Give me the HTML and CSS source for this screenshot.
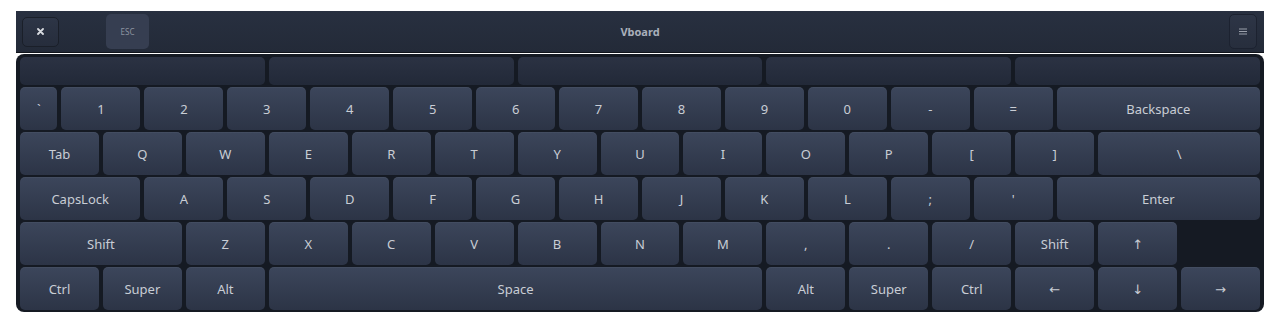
FILE: index.html
```html
<!DOCTYPE html>
<html>
<head>
<meta charset="utf-8">
<title>Vboard</title>
<link rel="stylesheet" href="styles.css">
</head>
<body>
<div class="app">
  <header class="titlebar">
    <button class="tb-btn btn-close" aria-label="Close">
      <svg width="7" height="7" viewBox="0 0 7 7"><path d="M1 1L6 6M6 1L1 6" stroke="#d8dbe0" stroke-width="1.8" stroke-linecap="round"/></svg>
    </button>
    <button class="tb-btn btn-esc">ESC</button>
    <div class="title">Vboard</div>
    <button class="tb-btn btn-menu" aria-label="Menu">
      <svg width="8" height="7" viewBox="0 0 8 7"><path d="M0 1H8M0 3.5H8M0 6H8" stroke="#9aa0ab" stroke-width="1"/></svg>
    </button>
  </header>
  <main class="panel">
    <div class="slots">
      <div class="slot"></div><div class="slot"></div><div class="slot"></div><div class="slot"></div><div class="slot"></div>
    </div>
    <div class="keys">
      <div class="key s1">`</div>
      <div class="key s2">1</div><div class="key s2">2</div><div class="key s2">3</div><div class="key s2">4</div><div class="key s2">5</div>
      <div class="key s2">6</div><div class="key s2">7</div><div class="key s2">8</div><div class="key s2">9</div><div class="key s2">0</div>
      <div class="key s2">-</div><div class="key s2">=</div>
      <div class="key s5">Backspace</div>

      <div class="key s2">Tab</div>
      <div class="key s2">Q</div><div class="key s2">W</div><div class="key s2">E</div><div class="key s2">R</div><div class="key s2">T</div>
      <div class="key s2">Y</div><div class="key s2">U</div><div class="key s2">I</div><div class="key s2">O</div><div class="key s2">P</div>
      <div class="key s2">[</div><div class="key s2">]</div>
      <div class="key s4">\</div>

      <div class="key s3">CapsLock</div>
      <div class="key s2">A</div><div class="key s2">S</div><div class="key s2">D</div><div class="key s2">F</div><div class="key s2">G</div>
      <div class="key s2">H</div><div class="key s2">J</div><div class="key s2">K</div><div class="key s2">L</div>
      <div class="key s2">;</div><div class="key s2">'</div>
      <div class="key s5">Enter</div>

      <div class="key s4">Shift</div>
      <div class="key s2">Z</div><div class="key s2">X</div><div class="key s2">C</div><div class="key s2">V</div><div class="key s2">B</div>
      <div class="key s2">N</div><div class="key s2">M</div>
      <div class="key s2">,</div><div class="key s2">.</div><div class="key s2">/</div>
      <div class="key s2">Shift</div>
      <div class="key s2">↑</div>
      <div class="blank s2"></div>

      <div class="key s2">Ctrl</div><div class="key s2">Super</div><div class="key s2">Alt</div>
      <div class="key s12">Space</div>
      <div class="key s2">Alt</div><div class="key s2">Super</div><div class="key s2">Ctrl</div>
      <div class="key s2">←</div><div class="key s2">↓</div><div class="key s2">→</div>
    </div>
  </main>
</div>
</body>
</html>
```
FILE: styles.css
```css
* { box-sizing: border-box; }
html, body { margin: 0; padding: 0; background: #ffffff; }
body {
  padding: 11px 16px 0 16px;
  font-family: "Noto Sans", "DejaVu Sans", sans-serif;
}
.app { width: 1248px; }

.titlebar {
  height: 42px;
  background: linear-gradient(#283040, #232a38);
  display: flex;
  align-items: center;
  border-bottom: 1px solid #10141b;
}
.tb-btn {
  font-family: inherit;
  padding: 0;
  display: flex;
  align-items: center;
  justify-content: center;
  cursor: pointer;
  border-radius: 5px;
  flex: none;
}
.btn-close {
  width: 37px;
  height: 30px;
  margin-left: 6px;
  border: 1px solid #1a1f29;
  background: linear-gradient(#2d3546, #262d3c);
}
.btn-esc {
  width: 43px;
  height: 35px;
  margin-left: 47px;
  border: none;
  background: #363e51;
  color: #8c93a0;
  font-size: 8px;
}
.title {
  flex: 1;
  text-align: center;
  color: #a9afba;
  font-size: 11px;
  font-weight: bold;
  padding-right: 98px;
}
.btn-menu {
  width: 28px;
  height: 35px;
  margin-right: 7px;
  border: 1px solid #1c2230;
  background: linear-gradient(#2d3546, #272e3d);
}

.panel {
  margin-top: 1px;
  background: #151a23;
  border-radius: 8px;
  padding: 3px 4px 2px 4px;
}
.slots {
  display: grid;
  grid-template-columns: repeat(5, 1fr);
  column-gap: 4px;
  height: 28px;
}
.slot {
  border-radius: 5px;
  background: linear-gradient(#2b3243, #222938);
}
.keys {
  margin-top: 2px;
  display: grid;
  grid-template-columns: repeat(30, 1fr);
  grid-auto-rows: 43px;
  column-gap: 4px;
  row-gap: 2px;
}
.key {
  border-radius: 5px;
  background: linear-gradient(#3c465b, #2c3446);
  box-shadow: inset 0 1px 0 rgba(255,255,255,0.04);
  color: #c9cdd5;
  font-size: 13px;
  display: flex;
  align-items: center;
  justify-content: center;
}
.s1 { grid-column: span 1; }
.s2 { grid-column: span 2; }
.s3 { grid-column: span 3; }
.s4 { grid-column: span 4; }
.s5 { grid-column: span 5; }
.s12 { grid-column: span 12; }
```
